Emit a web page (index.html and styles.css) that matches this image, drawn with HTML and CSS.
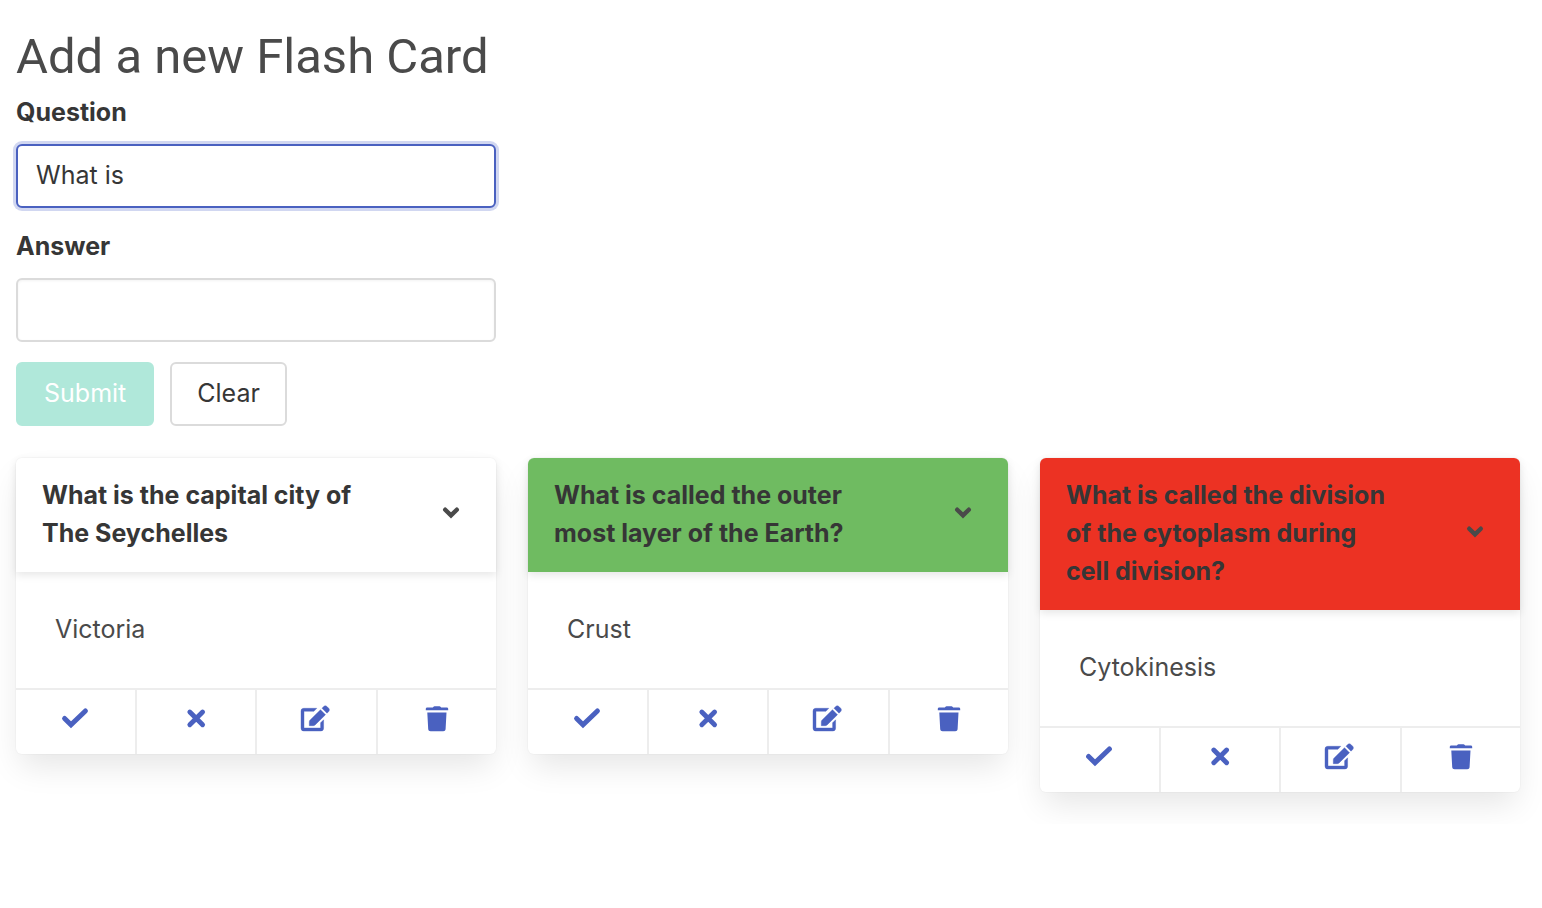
FILE: index.html
```html
<!DOCTYPE html>
<html lang="en">
<head>
<meta charset="utf-8">
<meta name="viewport" content="width=device-width, initial-scale=1">
<title>Flash Cards</title>
<link rel="stylesheet" href="styles.css">
</head>
<body>
<svg class="sprite" aria-hidden="true">
  <symbol id="check" viewBox="0 0 32 32"><path d="M5.600 16.500l6.400 6.300L26.400 9" fill="none" stroke="currentColor" stroke-width="5" stroke-linecap="round" stroke-linejoin="miter"/></symbol>
  <symbol id="xmark" viewBox="0 0 32 32"><path d="M9.800 10l12.800 12.800M22.600 10L9.800 22.800" fill="none" stroke="currentColor" stroke-width="4.800" stroke-linecap="round"/></symbol>
  <symbol id="edit" viewBox="0 0 32 32"><path d="M17.500 7H4.500a2.800 2.800 0 0 0-2.800 2.800v17.100a2.800 2.800 0 0 0 2.800 2.800h17a2.800 2.800 0 0 0 2.800-2.800v-8.400l-3 3v5.200H4.700V10h9.900z" transform="translate(-.7 -.7)" fill="currentColor" stroke="currentColor" stroke-width=".4"/><path d="M9.300 23.700v-3.800c0-.7.3-1.400.8-1.900L20.500 7.700l5 5-10.400 10.200c-.5.5-1.200.8-1.900.8zM22 6.200l1.700-1.700c.9-.9 2.300-.9 3.200 0l1.800 1.800c.9.9.9 2.300 0 3.200L27 11.200z" fill="currentColor" stroke="currentColor" stroke-width=".4"/></symbol>
  <symbol id="trash" viewBox="0 0 32 32"><path d="M4.800 8.200V6.900c0-.7.600-1.300 1.400-1.300h5.600l.5-.7c.3-.5.700-.7 1.200-.7h5c.5 0 .9.200 1.200.7l.5.700h5.600c.8 0 1.400.6 1.400 1.300v1.300zM6.300 10.400h19.200l-.9 16.500c-.1 1.300-1.100 2.300-2.400 2.300H9.600c-1.300 0-2.300-1-2.400-2.300z" fill="currentColor"/></symbol>
  <symbol id="angle" viewBox="0 0 32 32"><path d="M10.200 10.700l5.800 5.700 5.800-5.700" fill="none" stroke="currentColor" stroke-width="4.400" stroke-linecap="round"/></symbol>
</svg>
<main class="page">
  <form class="card-form">
    <h1 class="title">Add a new Flash Card</h1>
    <div class="field">
      <label class="label" for="question">Question</label>
      <input class="input is-focused" id="question" type="text" value="What is">
    </div>
    <div class="field">
      <label class="label" for="answer">Answer</label>
      <input class="input" id="answer" type="text">
    </div>
    <div class="buttons">
      <button class="button is-primary" type="submit" disabled>Submit</button>
      <button class="button" type="reset">Clear</button>
    </div>
  </form>
  <section class="cards">
    <article class="card">
      <header class="card-header">
        <h2 class="card-title">What is the capital city of The Seychelles</h2>
        <button class="card-toggle" type="button" aria-label="Toggle answer"><svg class="icon"><use href="#angle"/></svg></button>
      </header>
      <p class="card-content">Victoria</p>
      <footer class="card-footer">
        <a class="card-action" href="#" aria-label="Correct"><svg class="icon"><use href="#check"/></svg></a>
        <a class="card-action" href="#" aria-label="Wrong"><svg class="icon"><use href="#xmark"/></svg></a>
        <a class="card-action" href="#" aria-label="Edit"><svg class="icon"><use href="#edit"/></svg></a>
        <a class="card-action" href="#" aria-label="Delete"><svg class="icon"><use href="#trash"/></svg></a>
      </footer>
    </article>
    <article class="card">
      <header class="card-header is-correct">
        <h2 class="card-title">What is called the outer most layer of the Earth?</h2>
        <button class="card-toggle" type="button" aria-label="Toggle answer"><svg class="icon"><use href="#angle"/></svg></button>
      </header>
      <p class="card-content">Crust</p>
      <footer class="card-footer">
        <a class="card-action" href="#" aria-label="Correct"><svg class="icon"><use href="#check"/></svg></a>
        <a class="card-action" href="#" aria-label="Wrong"><svg class="icon"><use href="#xmark"/></svg></a>
        <a class="card-action" href="#" aria-label="Edit"><svg class="icon"><use href="#edit"/></svg></a>
        <a class="card-action" href="#" aria-label="Delete"><svg class="icon"><use href="#trash"/></svg></a>
      </footer>
    </article>
    <article class="card">
      <header class="card-header is-wrong">
        <h2 class="card-title">What is called the division of the cytoplasm during cell division?</h2>
        <button class="card-toggle" type="button" aria-label="Toggle answer"><svg class="icon"><use href="#angle"/></svg></button>
      </header>
      <p class="card-content">Cytokinesis</p>
      <footer class="card-footer">
        <a class="card-action" href="#" aria-label="Correct"><svg class="icon"><use href="#check"/></svg></a>
        <a class="card-action" href="#" aria-label="Wrong"><svg class="icon"><use href="#xmark"/></svg></a>
        <a class="card-action" href="#" aria-label="Edit"><svg class="icon"><use href="#edit"/></svg></a>
        <a class="card-action" href="#" aria-label="Delete"><svg class="icon"><use href="#trash"/></svg></a>
      </footer>
    </article>
  </section>
</main>
</body>
</html>
```
FILE: styles.css
```css
*, *::before, *::after { box-sizing: border-box; }
body {
  margin: 0;
  background: #fff;
  color: #4a4a4a;
  font: 400 25px/38px Inter, "Liberation Sans", sans-serif;
}
h1, h2, p { margin: 0; }
.sprite { display: none; }
.page {
  display: grid;
  grid-template-columns: repeat(3, minmax(0, 1fr));
  gap: 32px;
  padding: 21px 22px 32px 16px;
}
.card-form { grid-column: 1; }
.title {
  font-family: Roboto, Inter, sans-serif;
  font-size: 49px;
  font-weight: 400;
  line-height: 72px;
  white-space: nowrap;
}
.field { margin-bottom: 19px; }
.label {
  display: block;
  margin-bottom: 13px;
  color: #363636;
  font-weight: 700;
}
.input {
  display: block;
  width: 100%;
  height: 64px;
  padding: 0 18px 2px;
  border: 2px solid #dbdbdb;
  border-radius: 6px;
  background: #fff;
  box-shadow: inset 0 1px 3px rgba(10, 10, 10, .05);
  color: #363636;
  font: inherit;
}
.input.is-focused {
  border-color: #4a61c0;
  box-shadow: 0 0 0 3px rgba(72, 95, 199, .25);
}
.buttons { display: flex; gap: 16px; margin-top: 20px; }
.button {
  height: 64px;
  padding: 0 25px 2px;
  border: 2px solid #dbdbdb;
  border-radius: 6px;
  background: #fff;
  color: #363636;
  font: inherit;
}
.button.is-primary {
  padding: 0 26px 2px;
  border-color: #b0e8da;
  background: #b0e8da;
  color: #fff;
}
.cards {
  grid-column: 1 / -1;
  display: grid;
  grid-template-columns: repeat(3, minmax(0, 1fr));
  gap: 32px;
  align-items: start;
}
.card {
  border-radius: 6px;
  background: #fff;
  box-shadow: 0 16px 32px -4px rgba(10, 10, 10, .1), 0 0 0 1px rgba(10, 10, 10, .02);
}
.card-header {
  display: flex;
  border-radius: 6px 6px 0 0;
  box-shadow: 0 3px 8px rgba(10, 10, 10, .1);
}
.card-header.is-correct { background: #6fbb61; }
.card-header.is-wrong { background: #ec3223; }
.card-title {
  flex: 1;
  padding: 18px 26px 20px;
  color: #363636;
  font-size: 25px;
  font-weight: 700;
}
.card-toggle {
  display: flex;
  align-items: center;
  justify-content: center;
  width: 90px;
  padding: 0;
  border: 0;
  background: none;
  color: #4a4a4a;
}
.icon { display: block; width: 32px; height: 32px; }
.card-content { padding: 38px 39px 40px; }
.card-footer {
  display: flex;
  border-top: 2px solid #ededed;
}
.card-action {
  display: flex;
  flex: 1 1 0;
  box-sizing: content-box;
  justify-content: center;
  padding: 12px 0 20px;
  color: #4a61c0;
}
.card-action:not(:last-child) { border-right: 2px solid #ededed; }
```
